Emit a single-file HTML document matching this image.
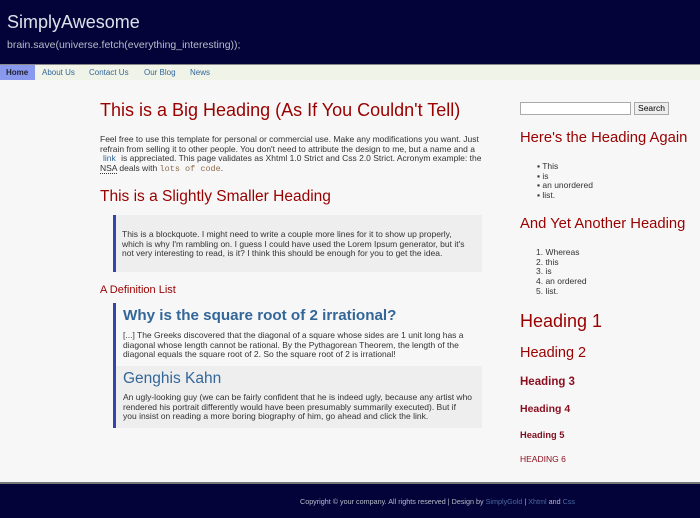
<!DOCTYPE html>
<html><head><meta charset="utf-8"><style>
*{margin:0;padding:0;box-sizing:border-box}
body{width:700px;height:518px;background:#f7f7f7;font-family:"Liberation Sans",sans-serif;position:relative;overflow:hidden;color:#333}
.a{position:absolute;white-space:nowrap}
.r{color:#990000}
.t{font-size:8.5px;line-height:9.7px;color:#333}
</style></head><body>
<div class="a" style="left:0;top:0;width:700px;height:64px;background:#03033a"></div>
<div class="a" style="left:7px;top:12px;font-size:18px;color:#dde2ea">SimplyAwesome</div>
<div class="a" style="left:7px;top:39px;font-size:10.5px;color:#b8bcc8">brain.save(universe.fetch(everything_interesting));</div>
<div class="a" style="left:0;top:64px;width:700px;height:1px;background:#888"></div>
<div class="a" style="left:0;top:65px;width:700px;height:15px;background:#eff3e8"></div>
<div class="a" style="left:0;top:65px;width:35px;height:15px;background:#8899ee"></div>
<div class="a" style="left:6px;top:68px;font-size:8px;font-weight:bold;color:#223">Home</div>
<div class="a" style="left:42px;top:68px;font-size:8px;color:#336699">About Us</div>
<div class="a" style="left:89px;top:68px;font-size:8px;color:#336699">Contact Us</div>
<div class="a" style="left:144px;top:68px;font-size:8px;color:#336699">Our Blog</div>
<div class="a" style="left:190px;top:68px;font-size:8px;color:#336699">News</div>

<div class="a r" style="left:100px;top:100px;font-size:18px">This is a Big Heading (As If You Couldn't Tell)</div>
<div class="a t" style="left:100px;top:135px">Feel free to use this template for personal or commercial use. Make any modifications you want. Just<br>refrain from selling it to other people. You don't need to attribute the design to me, but a name and a<br><span style="color:#336699;padding:0 3px">link</span> is appreciated. This page validates as Xhtml 1.0 Strict and Css 2.0 Strict. Acronym example: the<br><span style="border-bottom:1px dotted #333">NSA</span> deals with <span style="font-family:'Liberation Mono',monospace;color:#8a6a4a">lots of code</span>.</div>
<div class="a r" style="left:100px;top:188px;font-size:15.5px">This is a Slightly Smaller Heading</div>
<div class="a" style="left:113px;top:215px;width:369px;height:57px;background:#eee;border-left:3px solid #3344aa"></div>
<div class="a t" style="left:122px;top:230px">This is a blockquote. I might need to write a couple more lines for it to show up properly,<br>which is why I'm rambling on. I guess I could have used the Lorem Ipsum generator, but it's<br>not very interesting to read, is it? I think this should be enough for you to get the idea.</div>
<div class="a r" style="left:100px;top:284px;font-size:11px">A Definition List</div>
<div class="a" style="left:113px;top:303px;width:3px;height:125px;background:#3344aa"></div>
<div class="a" style="left:116px;top:366px;width:366px;height:62px;background:#eee"></div>
<div class="a" style="left:123px;top:307px;font-size:15.2px;font-weight:bold;color:#336699">Why is the square root of 2 irrational?</div>
<div class="a t" style="left:123px;top:331px">[...] The Greeks discovered that the diagonal of a square whose sides are 1 unit long has a<br>diagonal whose length cannot be rational. By the Pythagorean Theorem, the length of the<br>diagonal equals the square root of 2. So the square root of 2 is irrational!</div>
<div class="a" style="left:123px;top:370px;font-size:15.5px;color:#336699">Genghis Kahn</div>
<div class="a t" style="left:123px;top:393px">An ugly-looking guy (we can be fairly confident that he is indeed ugly, because any artist who<br>rendered his portrait differently would have been presumably summarily executed). But if<br>you insist on reading a more boring biography of him, go ahead and click the link.</div>

<div class="a" style="left:520px;top:102px;width:111px;height:13px;background:#fff;border:1px solid #aaa"></div>
<div class="a" style="left:634px;top:102px;width:35px;height:13px;background:#eee;border:1px solid #aaa;font-size:8.5px;line-height:11px;text-align:center;color:#000">Search</div>
<div class="a r" style="left:520px;top:130px;font-size:14.8px">Here's the Heading Again</div>
<div class="a t" style="left:537px;top:162px">▪ This<br>▪ is<br>▪ an unordered<br>▪ list.</div>
<div class="a r" style="left:520px;top:216px;font-size:14.8px">And Yet Another Heading</div>
<div class="a t" style="left:536px;top:248px">1. Whereas<br>2. this<br>3. is<br>4. an ordered<br>5. list.</div>
<div class="a r" style="left:520px;top:311px;font-size:18px">Heading 1</div>
<div class="a r" style="left:520px;top:345px;font-size:14.5px">Heading 2</div>
<div class="a r" style="left:520px;top:376px;font-size:11.5px;font-weight:bold;color:#8a1020">Heading 3</div>
<div class="a r" style="left:520px;top:403px;font-size:10.5px;font-weight:bold;color:#8a1020">Heading 4</div>
<div class="a r" style="left:520px;top:430px;font-size:9.3px;font-weight:bold;color:#801020">Heading 5</div>
<div class="a r" style="left:520px;top:454px;font-size:8.5px;color:#8a1020">HEADING 6</div>

<div class="a" style="left:0;top:482px;width:700px;height:36px;background:#03033a;border-top:2px solid #777"></div>
<div class="a" style="left:300px;top:497px;font-size:7.2px;color:#b8bcc8">Copyright © your company. All rights reserved | Design by <span style="color:#4a6aa0">SimplyGold</span> | <span style="color:#4a6aa0">Xhtml</span> and <span style="color:#4a6aa0">Css</span></div>
</body></html>
